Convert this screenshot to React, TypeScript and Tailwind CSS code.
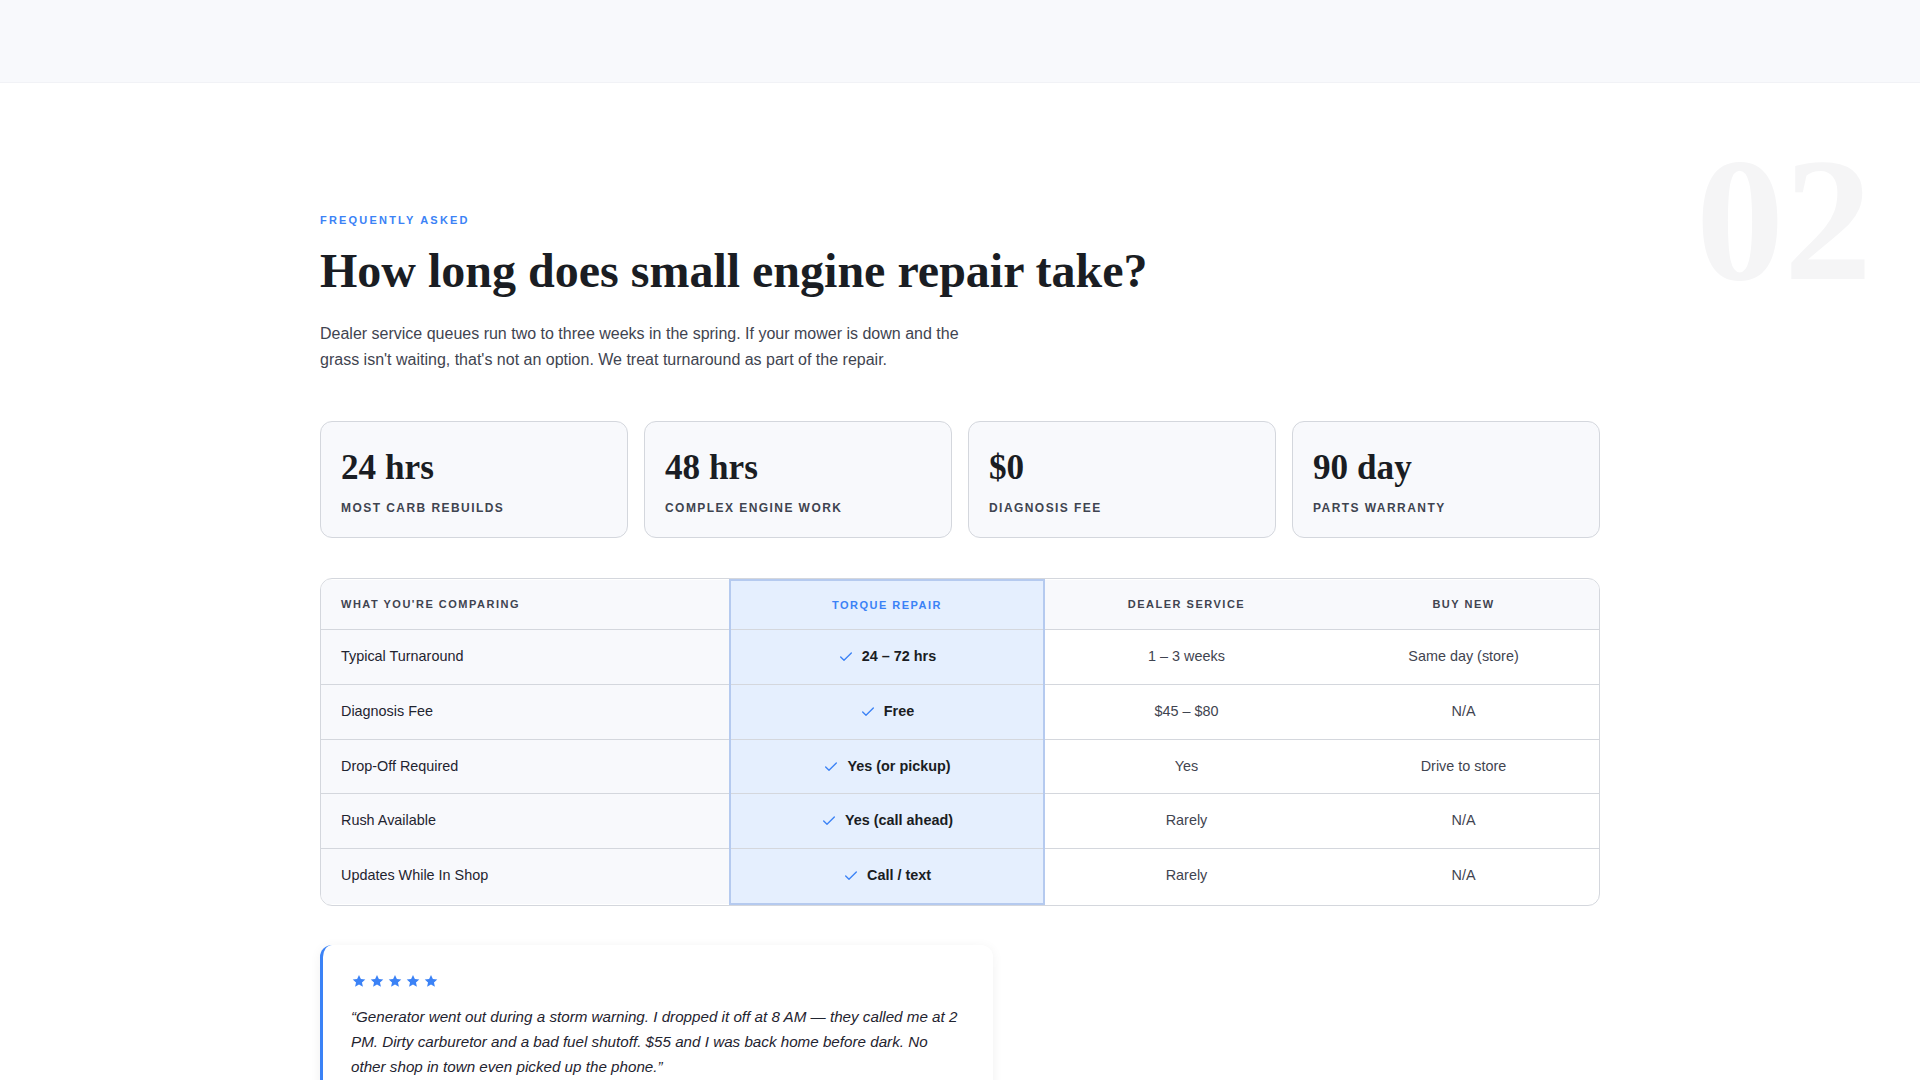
import { Check } from "lucide-react";

const stats = [
  { value: "24 hrs", label: "Most carb rebuilds" },
  { value: "48 hrs", label: "Complex engine work" },
  { value: "$0", label: "Diagnosis fee" },
  { value: "90 day", label: "Parts warranty" },
];

const rows = [
  { name: "Typical Turnaround", ours: "24 – 72 hrs", dealer: "1 – 3 weeks", buy: "Same day (store)", h: "h-[55px] [&>td]:pb-[1px]" },
  { name: "Diagnosis Fee", ours: "Free", dealer: "$45 – $80", buy: "N/A", h: "h-[55px] [&>td]:pb-[1px]" },
  { name: "Drop-Off Required", ours: "Yes (or pickup)", dealer: "Yes", buy: "Drive to store", h: "h-[54px]" },
  { name: "Rush Available", ours: "Yes (call ahead)", dealer: "Rarely", buy: "N/A", h: "h-[55px] [&>td]:pb-[1px]" },
  { name: "Updates While In Shop", ours: "Call / text", dealer: "Rarely", buy: "N/A", h: "h-[55px] [&>td]:pb-[1px]" },
];

const serif = "font-['Liberation_Serif',serif]";

const Star = () => (
  <svg viewBox="0 0 24 24" className="w-[14px] h-[14px] fill-[#3b82f6]">
    <path d="M12 1.5l3.2 7 7.6.8-5.7 5.1 1.6 7.5L12 18.1l-6.7 3.8 1.6-7.5L1.2 9.3l7.6-.8z" />
  </svg>
);

export default function App() {
  return (
    <div className="relative w-full h-[1080px] overflow-hidden bg-white font-['Liberation_Sans',sans-serif]">
      <div className="h-[83px] bg-[#f8f9fc] border-b border-[#f1f2f6]" />

      <div
        className={`absolute top-[132px] right-[48px] text-[176px] leading-none font-bold text-[#f5f5f6] select-none ${serif}`}
      >
        02
      </div>

      <section className="relative w-[1280px] mx-auto pt-[131px]">
        <div className="text-[11px] leading-[13px] font-bold tracking-[2.2px] uppercase text-[#3b82f6]">
          Frequently asked
        </div>
        <h1 className={`mt-[15px] text-[48px] leading-[58px] font-bold text-[#1a1d23] ${serif}`}>
          How long does small engine repair take?
        </h1>
        <p className="mt-[21px] w-[680px] text-[16px] leading-[26.4px] text-[#3f4450]">
          Dealer service queues run two to three weeks in the spring. If your mower is down and the grass isn't
          waiting, that's not an option. We treat turnaround as part of the repair.
        </p>

        <div className="mt-[47px] grid grid-cols-4 gap-4">
          {stats.map((s) => (
            <div key={s.label} className="h-[117px] rounded-xl border border-[#d4d7dd] bg-[#f8f9fc] px-5 pt-[26px]">
              <div className={`text-[35.2px] leading-[40px] font-bold text-[#1a1d23] ${serif}`}>{s.value}</div>
              <div className="mt-[12px] text-[12px] leading-[16px] font-bold tracking-[1.44px] uppercase text-[#3f4450]">
                {s.label}
              </div>
            </div>
          ))}
        </div>

        <div className="mt-[40px] rounded-xl border border-[#d4d7dd] overflow-hidden">
          <table className="w-full table-fixed border-collapse text-[14.4px] text-[#3f4450]">
            <colgroup>
              <col className="w-[409px]" />
              <col className="w-[314px]" />
              <col className="w-[284px]" />
              <col />
            </colgroup>
            <thead>
              <tr className="h-[50px] border-b border-[#d4d7dd] text-[11px] font-bold tracking-[1.5px] uppercase">
                <th className="bg-[#f8f9fc] pl-5 text-left">What you're comparing</th>
                <th className="bg-[#e5effe] border-x-2 border-t-2 border-[#b5caef] text-[#3b82f6]">Torque Repair</th>
                <th className="bg-[#f8f9fc]">Dealer Service</th>
                <th className="bg-[#f8f9fc]">Buy New</th>
              </tr>
            </thead>
            <tbody>
              {rows.map((r, i) => (
                <tr key={r.name} className={i < rows.length - 1 ? `${r.h} border-b border-[#d4d7dd]` : r.h}>
                  <td className="bg-[#f8f9fc] pl-5 text-[#1f2430]">{r.name}</td>
                  <td
                    className={
                      i < rows.length - 1
                        ? "bg-[#e5effe] border-x-2 border-[#b5caef] text-center font-bold text-[#1a1d23]"
                        : "bg-[#e5effe] border-x-2 border-b-2 border-[#b5caef] text-center font-bold text-[#1a1d23]"
                    }
                  >
                    <Check className="inline-block w-4 h-4 mr-2 align-[-4px] text-[#3b82f6]" strokeWidth={2} />
                    {r.ours}
                  </td>
                  <td className="text-center">{r.dealer}</td>
                  <td className="text-center">{r.buy}</td>
                </tr>
              ))}
            </tbody>
          </table>
        </div>

        <div className="mt-[39px] w-[673px] rounded-xl border-l-[3px] border-[#3b82f6] bg-white px-7 pt-[29px] pb-7 shadow-[0_2px_12px_rgba(0,0,0,0.06)]">
          <div className="flex gap-1 ml-[1px]">
            <Star />
            <Star />
            <Star />
            <Star />
            <Star />
          </div>
          <p className="mt-[16px] text-[15.2px] leading-[25.08px] italic text-[#1f2430]">
            “Generator went out during a storm warning. I dropped it off at 8 AM — they called me at 2 PM. Dirty
            carburetor and a bad fuel shutoff. $55 and I was back home before dark. No other shop in town even picked
            up the phone.”
          </p>
        </div>
      </section>
    </div>
  );
}
